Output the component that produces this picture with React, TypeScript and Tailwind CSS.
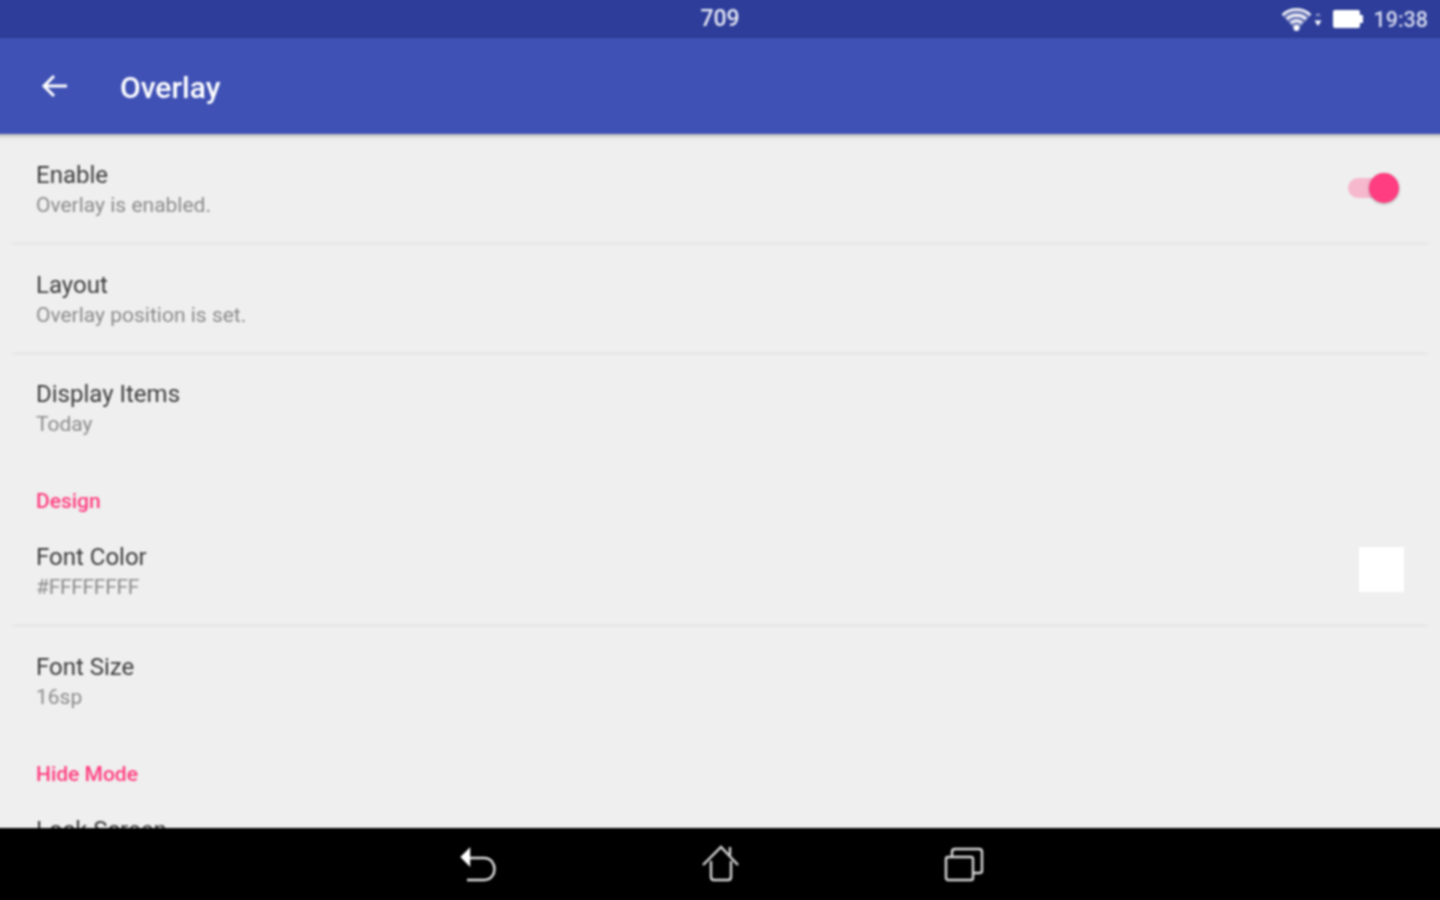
import React from 'react';

interface RowProps {
  title: string;
  summary: string;
  className?: string;
  summaryClassName?: string;
  children?: React.ReactNode;
}

const Row: React.FC<RowProps> = ({ title, summary, className = 'h-[110px]', summaryClassName = '', children }) => (
  <div className={`mx-[15px] shrink-0 flex items-center justify-between pl-6 ${className}`}>
    <div className="flex flex-col">
      <span className="text-[24px] leading-[30px] text-[#3c3c3c]">{title}</span>
      <span className={`text-[21px] leading-[30px] text-[#8a8a8a] ${summaryClassName}`}>{summary}</span>
    </div>
    {children}
  </div>
);

const Category = ({ label }: { label: string }) => (
  <div className="pl-[39px] pt-[22px] h-[53px] shrink-0 flex items-center text-[21px] font-medium text-[#ff3d80]">{label}</div>
);

const WifiIcon = () => (
  <svg width="42" height="26" viewBox="0 0 42 26" fill="none" className="mr-[10px]">
    <path d="M1 9 C9 0 22 0 30 9 L15.5 25 Z" fill="white" opacity="0.35" />
    <path d="M1.5 9 C9 1.5 22 1.5 29.5 9" stroke="white" strokeWidth="2.4" />
    <path d="M6 13 C11 8 20 8 25 13" stroke="white" strokeWidth="2.4" />
    <path d="M10 17 C13 14 18 14 21 17" stroke="white" strokeWidth="2.4" />
    <circle cx="15.5" cy="22" r="3" fill="white" />
    <path d="M34 10 L37 7 L40 10 Z" fill="white" opacity="0.5" />
    <path d="M33.5 14.5 H40.5 L37 20 Z" fill="white" />
  </svg>
);

const BatteryIcon = () => (
  <svg width="31" height="20" viewBox="0 0 31 20" className="mr-[9px]">
    <rect x="0" y="1" width="27" height="18" rx="2" fill="white" />
    <rect x="27" y="6" width="3" height="8" fill="white" />
  </svg>
);

export default function App() {
  return (
    <div className="h-screen w-full overflow-hidden bg-[#efefef]">
      {/* 3px bleed all round so the soft filter doesn't fade at the window edge */}
      <div className="w-[1446px] h-[906px] -ml-[3px] -mt-[3px] flex flex-col overflow-hidden bg-[#efefef] font-['Roboto',sans-serif] blur-[0.8px]">
        {/* status bar */}
        <div className="h-[41px] pt-[3px] shrink-0 relative flex items-center justify-end pr-[15px] bg-[#2d3d99] text-white">
          <span className="absolute left-0 right-0 text-center text-[23px] leading-[34px] font-medium text-[#e6e8f5]">709</span>
          <WifiIcon />
          <BatteryIcon />
          <span className="text-[21.5px] leading-[38px] font-medium text-[#d5d9ee] mt-[2px]">19:38</span>
        </div>

        {/* app bar */}
        <div className="h-[96px] shrink-0 z-10 flex items-center bg-[#3f51b5] shadow-[0_2px_4px_rgba(0,0,0,0.25)]">
          <svg width="28" height="26" viewBox="0 0 28 26" fill="none" className="ml-[44px] mb-[1px]" stroke="white" strokeWidth="3">
            <path d="M26 13 H3" />
            <path d="M13 3 L3 13 L13 23" />
          </svg>
          <span className="ml-[51px] mt-[3px] text-[30px] font-medium text-white">Overlay</span>
        </div>

        {/* settings list */}
        <div className="flex-1 min-h-0 overflow-hidden flex flex-col">
          <Row title="Enable" summary="Overlay is enabled." className="h-[111px] pt-[4px] border-b-[3px] border-[#e8e8e8]">
            <div className="relative w-[50px] h-[20px] mr-[30px] mb-[4px] rounded-full bg-[#f6b8cd]">
              <div className="absolute right-[-1px] top-[-5px] w-[30px] h-[30px] rounded-full bg-[#ff3d80] shadow-[0_1px_3px_rgba(0,0,0,0.3)]" />
            </div>
          </Row>
          <Row title="Layout" summary="Overlay position is set." className="h-[110px] pt-[3px] border-b-[3px] border-[#e8e8e8]" />
          <Row title="Display Items" summary="Today" className="h-[109px] pb-[1px]" />
          <Category label="Design" />
          <Row title="Font Color" summary="#FFFFFFFF" summaryClassName="tracking-[-0.3px]" className="h-[110px] pt-[3px] border-b-[3px] border-[#e8e8e8]">
            <div className="w-[45px] h-[45px] mr-[24px] mb-[5px] bg-white" />
          </Row>
          <Row title="Font Size" summary="16sp" />
          <Category label="Hide Mode" />
          <Row title="Lock Screen" summary="Disabled" />
        </div>

        {/* nav bar */}
        <div className="h-[75px] pb-[3px] shrink-0 flex items-center justify-center bg-black">
          <svg width="40" height="38" viewBox="0 0 40 38" fill="none" stroke="#e2e2e2" strokeWidth="2.4" className="ml-[4px] mr-[201px] mt-[2px]">
            <path d="M8 12 H24 C38 12 38 34 24 34 H7" />
            <path d="M9 4 L2 11 L9 18 Z" fill="white" stroke="white" />
          </svg>
          <svg width="40" height="40" viewBox="0 0 40 40" fill="none" stroke="#d8d8d8" strokeWidth="2.4" className="mr-[203px]">
            <path d="M2 21 L20 3 L37 21" />
            <path d="M29 11 V3" />
            <path d="M10 17 V33 Q10 36 13 36 H27 Q30 36 30 33 V17" />
          </svg>
          <svg width="40" height="36" viewBox="0 0 40 36" fill="none" stroke="#d8d8d8" strokeWidth="2.4">
            <rect x="2" y="11" width="27" height="23" rx="2" />
            <path d="M8 11 V6 Q8 3 11 3 H35 Q38 3 38 6 V25 Q38 27 35 27 H29" />
          </svg>
        </div>
      </div>
    </div>
  );
}
